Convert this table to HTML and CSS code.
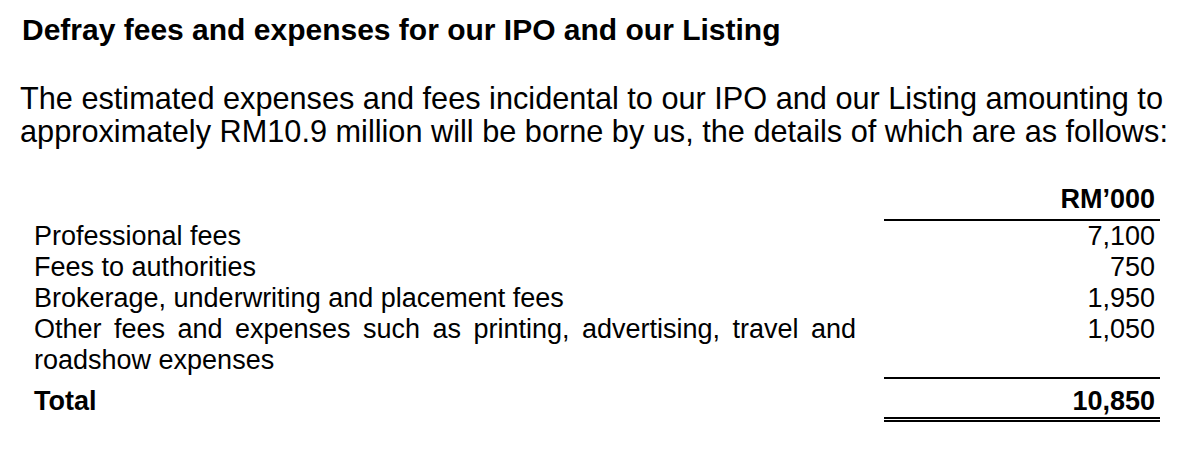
FILE: index.html
```html
<!DOCTYPE html>
<html>
<head>
<meta charset="utf-8">
<link rel="stylesheet" href="styles.css">
</head>
<body>
<div class="page">
  <h1 class="title">Defray fees and expenses for our IPO and our Listing</h1>
  <p class="intro">The estimated expenses and fees incidental to our IPO and our Listing amounting to approximately RM10.9 million will be borne by us, the details of which are as follows:</p>
  <div class="table">
    <div class="row head">
      <div class="label"></div>
      <div class="amount bold underline">RM’000</div>
    </div>
    <div class="row">
      <div class="label">Professional fees</div>
      <div class="amount">7,100</div>
    </div>
    <div class="row">
      <div class="label">Fees to authorities</div>
      <div class="amount">750</div>
    </div>
    <div class="row">
      <div class="label">Brokerage, underwriting and placement fees</div>
      <div class="amount">1,950</div>
    </div>
    <div class="row">
      <div class="label justify">Other fees and expenses such as printing, advertising, travel and roadshow expenses</div>
      <div class="amount">1,050</div>
    </div>
    <div class="row total">
      <div class="label bold total-label">Total</div>
      <div class="amount bold total-cell">10,850</div>
    </div>
  </div>
</div>
</body>
</html>
```

FILE: styles.css
```css
html, body {
  margin: 0;
  padding: 0;
  background: #fff;
  overflow: hidden;
}
.page {
  font-family: "Liberation Sans", Arial, sans-serif;
  color: #000;
  box-sizing: border-box;
  width: 1200px;
  padding: 13px 0 0 20px;
}
.title {
  margin: 0 0 0 2px;
  font-size: 30px;
  line-height: 34px;
  font-weight: bold;
}
.intro {
  margin: 35.4px 0 0 0;
  width: 1160px;
  font-size: 30.7px;
  line-height: 33px;
}
.table {
  margin: 36px 0 0 14px;
  font-size: 27px;
  line-height: 31px;
}
.row {
  display: flex;
  align-items: flex-start;
}
.label {
  width: 822px;
  flex: none;
}
.justify {
  text-align: justify;
}
.amount {
  margin-left: 28px;
  width: 276px;
  flex: none;
  box-sizing: border-box;
  padding-right: 5px;
  text-align: right;
}
.bold {
  font-weight: bold;
}
.underline {
  padding-bottom: 4px;
  border-bottom: 2px solid #000;
}
.total {
  margin-top: 1px;
}
.total-label {
  padding-top: 9px;
}
.total-cell {
  border-top: 2px solid #000;
  border-bottom: 5px double #000;
  padding-top: 7px;
  padding-bottom: 0;
}
```
